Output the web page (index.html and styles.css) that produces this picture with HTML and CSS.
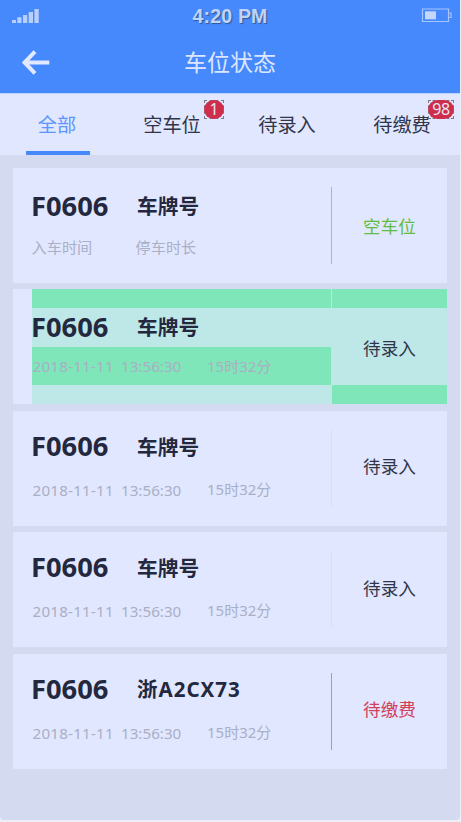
FILE: index.html
```html
<!DOCTYPE html>
<html lang="zh-CN">
<head>
<meta charset="utf-8">
<title>车位状态</title>
<link rel="stylesheet" href="styles.css">
</head>
<body>
<div class="screen">
  <header class="header">
    <div class="statusbar">
      <svg class="signal" width="28" height="16" viewBox="0 0 28 16" fill="#b9cffd"><path d="M0 12h4v3H0zM5.300 9.300h4.200V15H5.300zM11 7h4.200v8H11zM16.700 4h4.300v11h-4.300zM22.400 1h4.300v14h-4.300z"/></svg>
      <span class="clock">4:20 PM</span>
      <svg class="battery" width="31" height="16" viewBox="0 0 31 16"><path d="M1.500 1h26v12.500h-26zM27.500 5h2.500v4.500h-2.500" fill="none" stroke="#a6c4fd" stroke-width="1.200"/><path d="M4 3.300h11v8H4z" fill="#c5d6fe"/></svg>
    </div>
    <div class="navbar">
      <svg class="back" width="28" height="26" viewBox="0 0 28 26" fill="none" stroke="#e1e8ff" stroke-width="4"><path d="M13 2.700L2.500 13.500 13 24.300M2.600 13.500h24.700"/></svg>
      <h1 class="title">车位状态</h1>
    </div>
  </header>
  <nav class="tabs">
    <div class="tab active"><span>全部</span></div>
    <div class="tab"><span>空车位</span><b class="badge one"><i>1</i></b></div>
    <div class="tab"><span>待录入</span></div>
    <div class="tab"><span>待缴费</span><b class="badge many"><i>98</i></b></div>
  </nav>
  <main class="list">
    <section class="card free">
      <div class="info">
        <div class="row name"><span class="slot">F0606</span><span class="plate">车牌号</span></div>
        <div class="row meta labels"><span class="in">入车时间</span><span>停车时长</span></div>
      </div>
      <div class="state">空车位</div>
    </section>
    <section class="card grid">
      <div class="info">
        <div class="row name"><span class="slot">F0606</span><span class="plate">车牌号</span></div>
        <div class="row meta"><span class="date">2018-11-11</span><span class="time">13:56:30</span><span class="span">15时32分</span></div>
      </div>
      <div class="state">待录入</div>
    </section>
    <section class="card">
      <div class="info">
        <div class="row name"><span class="slot">F0606</span><span class="plate">车牌号</span></div>
        <div class="row meta"><span class="date">2018-11-11</span><span class="time">13:56:30</span><span class="span">15时32分</span></div>
      </div>
      <div class="state">待录入</div>
    </section>
    <section class="card">
      <div class="info">
        <div class="row name"><span class="slot">F0606</span><span class="plate">车牌号</span></div>
        <div class="row meta"><span class="date">2018-11-11</span><span class="time">13:56:30</span><span class="span">15时32分</span></div>
      </div>
      <div class="state">待录入</div>
    </section>
    <section class="card due">
      <div class="info">
        <div class="row name"><span class="slot">F0606</span><span class="plate">浙A2CX73</span></div>
        <div class="row meta"><span class="date">2018-11-11</span><span class="time">13:56:30</span><span class="span">15时32分</span></div>
      </div>
      <div class="state">待缴费</div>
    </section>
  </main>
</div>
</body>
</html>
```
FILE: styles.css
```css
* { box-sizing: border-box; }
body {
  margin: 0;
  background: #eceff7;
  font-family: "Noto Sans", "Noto Sans CJK SC", sans-serif;
  color: #30354a;
}
.screen {
  width: 460px;
  height: 820px;
  overflow: hidden;
  background: #d4daef;
  border-radius: 0 0 4px 4px;
}
.header { height: 93px; background: #4689fd; }
.statusbar {
  display: grid;
  grid-template-columns: 1fr auto 1fr;
  height: 32px;
  padding: 8px 8px 0;
}
.signal { margin-left: 4px; }
.clock {
  font: bold 19.500px/16px "Liberation Sans", sans-serif;
  color: #c0d3fc;
  text-shadow: 1px 1px 1px #34588f;
  letter-spacing: .2px;
}
.battery { justify-self: end; }
.navbar {
  display: grid;
  grid-template-columns: 28px 1fr 28px;
  align-items: center;
  height: 60px;
  padding: 0 22px;
}
.title {
  margin: 0;
  text-align: center;
  font-size: 23px;
  line-height: 28px;
  font-weight: 400;
  color: #dce6ff;
}
.tabs {
  display: grid;
  grid-template-columns: repeat(4, 115px);
  height: 62px;
  background: #e1e7fe;
  border-top: 1px solid #bfd1fd;
}
.tab {
  position: relative;
  display: flex;
  justify-content: center;
  padding-right: 1px;
  font-size: 19.200px;
  line-height: 61px;
  font-weight: 400;
}
.active { color: #5b95fd; }
.active::after {
  content: "";
  position: absolute;
  left: 26px;
  bottom: 0;
  width: 64px;
  height: 4px;
  background: #4689fd;
}
.badge {
  position: absolute;
  top: 6px;
  height: 19px;
  border: 1px dashed #777b88;
  font-weight: 400;
}
.badge i {
  display: block;
  height: 19px;
  margin: -1px;
  border-radius: 10px;
  background: #ce2e4b;
  color: #e9e5f5;
  font-size: 16px;
  line-height: 19px;
  font-style: normal;
  text-align: center;
}
.one { left: 89px; width: 20px; }
.many { left: 83px; width: 26px; }
.many i { letter-spacing: -.5px; }
.list { padding: 12.600px 13px 0; }
.card {
  display: flex;
  align-items: center;
  width: 434px;
  height: 115px;
  margin-bottom: 6.500px;
  padding-left: 19px;
  border-radius: 1px;
  background: #e1e7fe;
}
.info {
  width: 300px;
  height: 77px;
  border-right: 1px solid #d8def3;
}
.row { display: flex; height: 38px; white-space: nowrap; }
.name { line-height: 32px; font-weight: 700; color: #23283e; }
.slot { width: 105px; font-size: 27.300px; margin-left: -1px; }
.plate { font-size: 20.700px; line-height: 34px; margin-left: 1px; }
.meta {
  font-size: 15.200px;
  line-height: 44px;
  font-weight: 400;
  color: #a9afc5;
}
.date { width: 89px; padding-left: .5px; letter-spacing: .2px; }
.time { width: 86px; }
.span { line-height: 42px; font-size: 15px; }
.in { width: 104px; margin-left: -.5px; }
.state {
  width: 115px;
  line-height: 30px;
  margin-top: -4px;
  text-align: center;
  font-size: 17.600px;
  font-weight: 400;
}
.free .info { border-color: #91cb9c; }
.free .state { margin-top: 1px; color: #61bd42; }
.free .name, .grid .name { line-height: 37px; }
.free .plate, .grid .plate { line-height: 39px; }
.due .info { border-color: #d985a1; }
.due .state { color: #d33e5b; }
.due .plate { letter-spacing: 1px; font-size: 20.500px; line-height: 33px; }
.grid {
  align-items: stretch;
  background: linear-gradient(90deg, #e1e7fe 19px, #bee7e8 19px);
}
.grid .info {
  height: 115px;
  padding-top: 19px;
  border-color: #c3e5e2;
  background: linear-gradient(#7fe6b9 19px, #bee7e8 19px 58px, #7fe6b9 58px 96px, #bee7e8 96px);
}
.grid .meta, .grid .span { line-height: 40px; }
.grid .state {
  margin-top: 0;
  line-height: 118px;
  background: linear-gradient(#7fe6b9 19px, #bee7e8 19px 96px, #7fe6b9 96px);
}
```
